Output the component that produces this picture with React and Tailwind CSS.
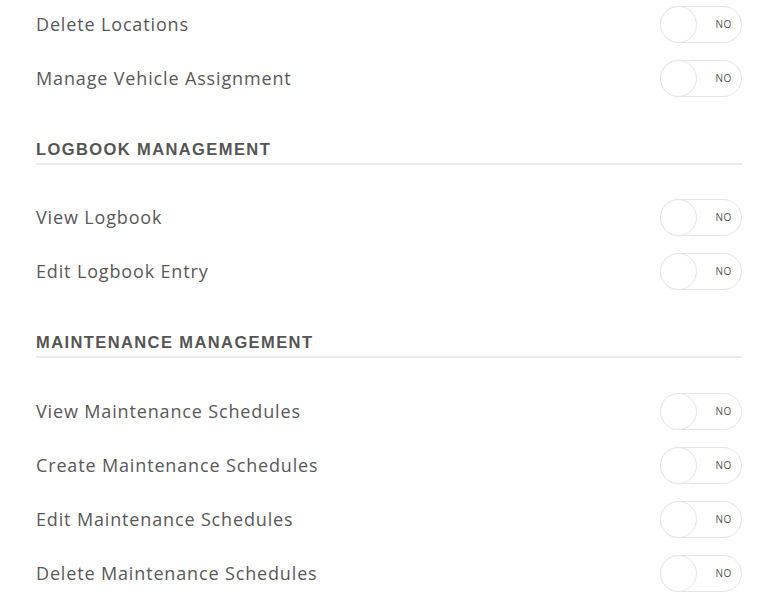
import React from "react";

function Toggle() {
  return (
    <div className="relative flex h-[37px] w-[82px] items-center rounded-full border border-[#e6e6e6] bg-white">
      <div className="absolute left-[-1px] top-[-1px] h-[37px] w-[37px] rounded-full border border-[#e6e6e6] bg-white" />
      <span className="ml-auto mr-[9px] text-[10px] tracking-[0.6px] text-[#555]" style={{ fontFamily: '"Open Sans", sans-serif' }}>NO</span>
    </div>
  );
}

function Row({ label }) {
  return (
    <div className="flex h-[54px] items-center justify-between">
      <span className="text-[18px] text-[#595959] tracking-[0.85px]" style={{ fontFamily: '"Open Sans", sans-serif' }}>{label}</span>
      <Toggle />
    </div>
  );
}

function Heading({ title }) {
  return (
    <div className="pt-[34.5px] pb-[26px]">
      <div className="border-b-2 border-[#ebebeb] pb-[5px] text-[16.5px] font-bold leading-[18px] tracking-[1.4px] text-[#555]" style={{ fontFamily: '"Liberation Sans", Arial, sans-serif' }}>
        {title}
      </div>
    </div>
  );
}

export default function App() {
  return (
    <div className="h-[607px] w-[778px] overflow-hidden bg-white">
      <div className="-mt-[3px] pl-[36px] pr-[36px]">
        <Row label="Delete Locations" />
        <Row label="Manage Vehicle Assignment" />
        <Heading title="LOGBOOK MANAGEMENT" />
        <Row label="View Logbook" />
        <Row label="Edit Logbook Entry" />
        <Heading title="MAINTENANCE MANAGEMENT" />
        <Row label="View Maintenance Schedules" />
        <Row label="Create Maintenance Schedules" />
        <Row label="Edit Maintenance Schedules" />
        <Row label="Delete Maintenance Schedules" />
      </div>
    </div>
  );
}
